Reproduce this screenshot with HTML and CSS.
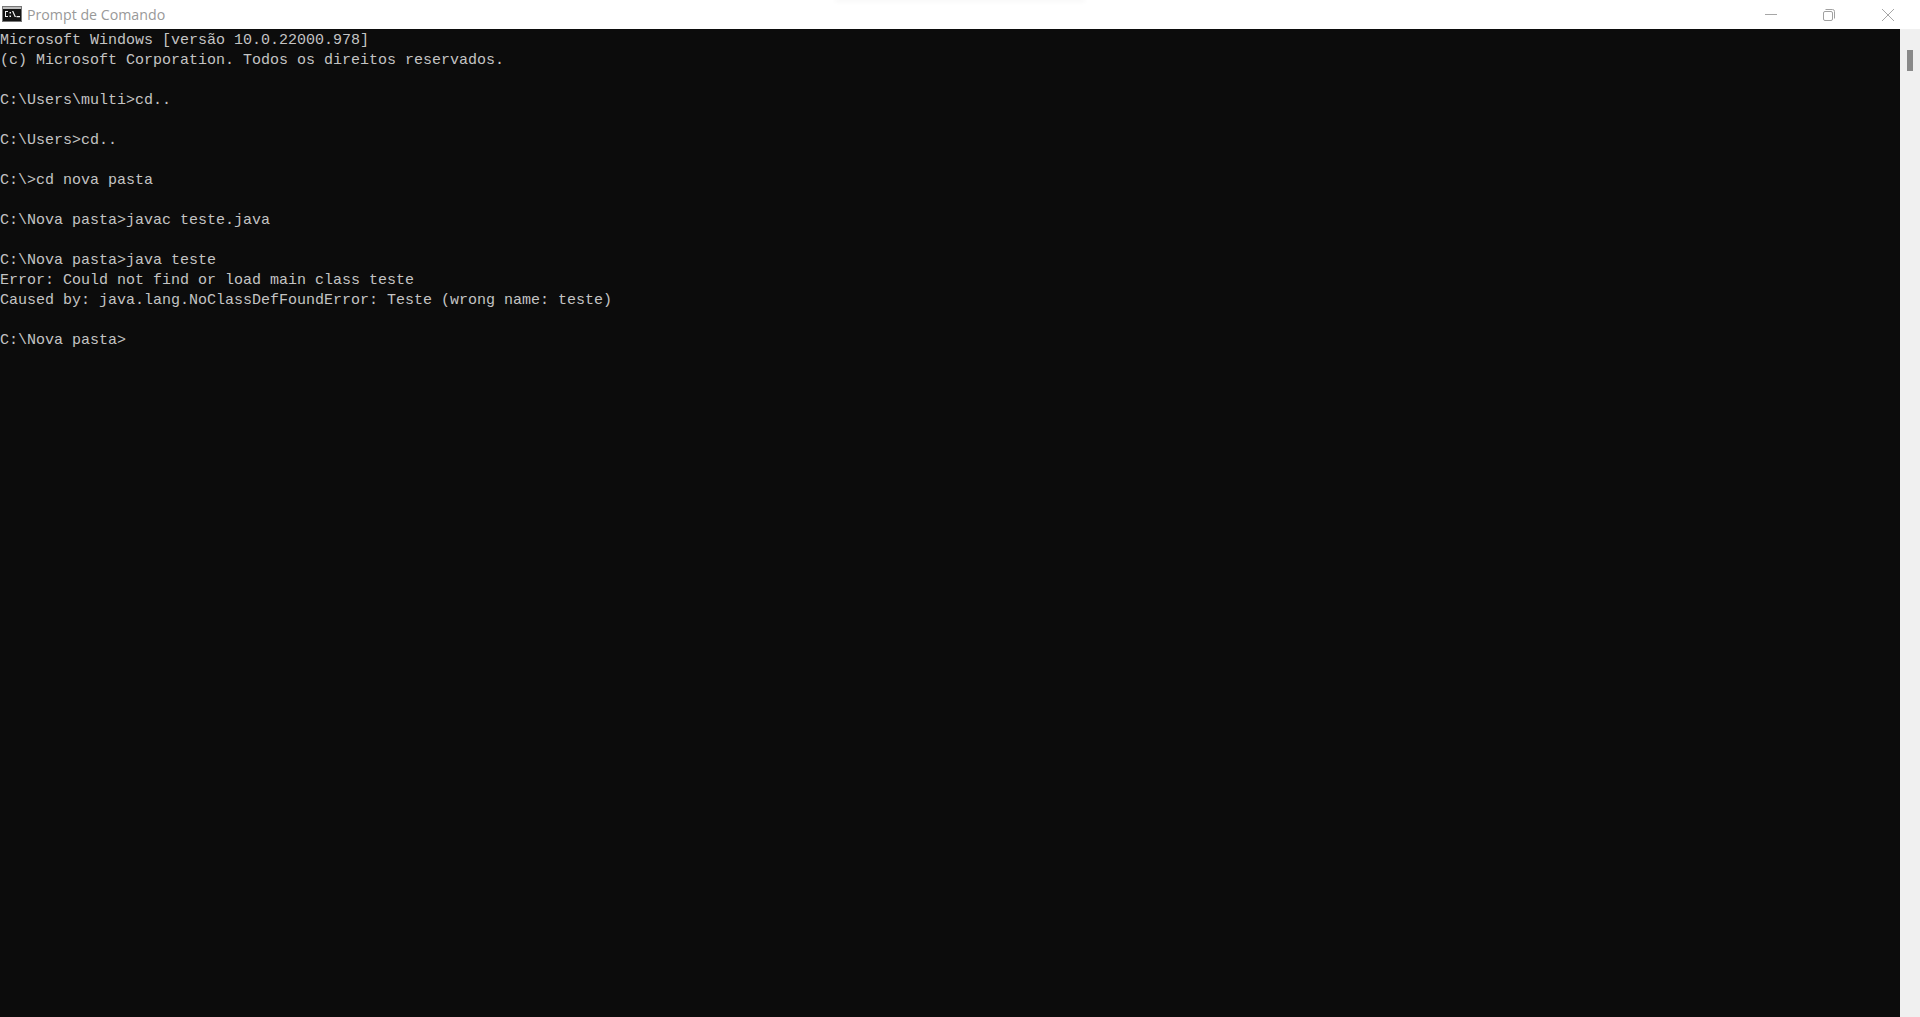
FILE: index.html
```html
<!DOCTYPE html>
<html lang="pt">
<head>
<meta charset="utf-8">
<title>Prompt de Comando</title>
<link rel="stylesheet" href="styles.css">
</head>
<body>
<div class="window">
  <header class="titlebar">
    <div class="shadow"></div>
    <svg class="app-icon" width="20" height="16" viewBox="0 0 20 16">
      <rect x="0.5" y="0.5" width="19" height="15" fill="#141414" stroke="#777"/>
      <rect x="1" y="1" width="18" height="2" fill="#bdbdbd"/>
      <path d="M3 5H6V6H4V10H6V11H3ZM7.5 6H9V7.5H7.5ZM7.5 9.5H9V11H7.5ZM10 5H11.3L14 11H12.7ZM14.5 10H18V11.2H14.5Z" fill="#f4f4f4"/>
    </svg>
    <span class="title">Prompt de Comando</span>
    <div class="controls">
      <span class="control"><svg width="14" height="14" viewBox="0 0 14 14"><path d="M1 6.5H13" stroke="#a6a6a6" stroke-width="1"/></svg></span>
      <span class="control"><svg width="14" height="14" viewBox="0 0 14 14" fill="none" stroke="#a0a0a0"><rect x="1.5" y="3.5" width="9" height="9" rx="1.5"/><path d="M3.5 1.5H10.5Q12.5 1.5 12.5 3.5V10.5"/></svg></span>
      <span class="control"><svg width="14" height="14" viewBox="0 0 14 14"><path d="M1 1L13 13M13 1L1 13" stroke="#a6a6a6" stroke-width="1"/></svg></span>
    </div>
  </header>
  <div class="content">
    <pre class="console">Microsoft Windows [versão 10.0.22000.978]
(c) Microsoft Corporation. Todos os direitos reservados.

C:\Users\multi&gt;cd..

C:\Users&gt;cd..

C:\&gt;cd nova pasta

C:\Nova pasta&gt;javac teste.java

C:\Nova pasta&gt;java teste
Error: Could not find or load main class teste
Caused by: java.lang.NoClassDefFoundError: Teste (wrong name: teste)

C:\Nova pasta&gt;</pre>
    <div class="scrollbar"><div class="thumb"></div></div>
  </div>
</div>
</body>
</html>
```
FILE: styles.css
```css
html, body {
  margin: 0;
  height: 100%;
  background: #0c0c0c;
  overflow: hidden;
}
.window {
  display: flex;
  flex-direction: column;
  height: 100vh;
}
.titlebar {
  position: relative;
  flex: 0 0 29px;
  display: flex;
  align-items: center;
  background: #fff;
  padding-left: 2px;
  padding-right: 3px;
  overflow: hidden;
}
.shadow {
  position: absolute;
  left: 835px;
  top: -2px;
  width: 250px;
  height: 2px;
  box-shadow: 0 1px 5px rgba(0, 0, 0, 0.07);
}
.app-icon {
  flex: none;
  margin-top: -2px;
}
.title {
  margin-left: 5px;
  font: 14.2px/29px "Open Sans", sans-serif;
  color: #999;
}
.controls {
  margin-left: auto;
  display: flex;
}
.control {
  width: 58.5px;
  height: 28px;
  align-self: flex-start;
  display: flex;
  align-items: center;
  justify-content: center;
}
.content {
  flex: 1;
  display: flex;
  min-height: 0;
}
.console {
  flex: 1;
  margin: 0;
  padding-top: 2px;
  font: 15px/20px "Liberation Mono", monospace;
  color: #c4c4c4;
  background: #0c0c0c;
}
.scrollbar {
  flex: 0 0 20px;
  margin-left: 1px;
  background: #f0f0f0;
  padding: 21px 7px 0 7px;
  box-sizing: border-box;
}
.thumb {
  height: 21px;
  background: #8a8a8a;
}
```
